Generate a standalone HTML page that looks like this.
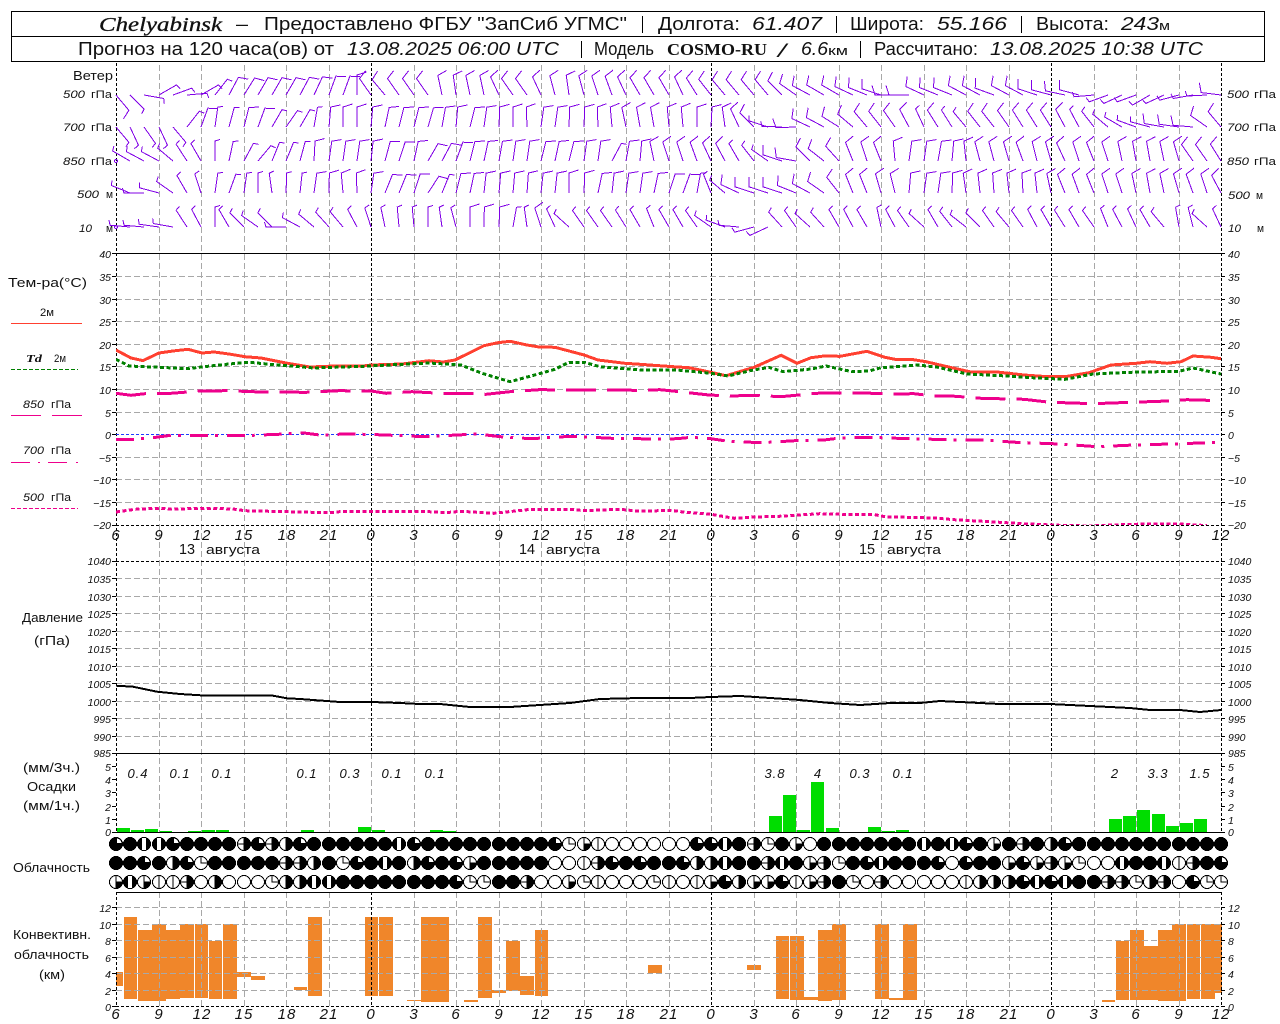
<!DOCTYPE html>
<html lang="ru"><head><meta charset="utf-8"><title>Chelyabinsk</title>
<style>
html,body{margin:0;padding:0;background:#fff}
svg{display:block}
text{font-family:"Liberation Sans",sans-serif;fill:#111}
.it{font-style:italic}
.se{font-family:"Liberation Serif",serif;font-style:italic;stroke:#111;stroke-width:.3px}
.h{font-size:18px}.s{font-size:13px}.a{font-size:10.5px;font-style:italic}.t{font-size:15px;font-style:italic;text-anchor:middle;letter-spacing:1px}
.w{font-size:11px}
.l{shape-rendering:crispEdges;fill:none}
</style></head><body>
<svg width="1280" height="1024" viewBox="0 0 1280 1024" xmlns="http://www.w3.org/2000/svg">
<defs>
<path id="L" d="M0 0V-20l9.500-3"/>
<path id="S" d="M0 0V-20l5-1.500"/>
<circle id="o" r="6.500"/>
<g id="E"><use href="#o" fill="#fff" stroke="#000"/></g>
<g id="F"><use href="#o" fill="#000" stroke="#000"/></g>
<g id="R"><use href="#o" fill="#fff" stroke="#000"/><path d="M0-6.500A6.500 6.500 0 0 1 0 6.500Z" fill="#000" stroke="#000"/></g>
<g id="W"><use href="#o" fill="#000" stroke="#000"/><path d="M1-1V-5.500A5.500 5.500 0 0 1 5.500-1Z" fill="#fff"/></g>
<g id="V"><use href="#o" fill="#fff" stroke="#000"/><path d="M0-6V6" stroke="#000"/></g>
<g id="H"><use href="#R"/><path d="M-6 0H0" stroke="#000"/></g>
<g id="Q"><use href="#o" fill="#fff" stroke="#000"/><path d="M0-6V0H6" stroke="#000"/></g>
<g id="P"><use href="#o" fill="#fff" stroke="#000"/><path d="M0-6V6M0 0H6" stroke="#000"/><path d="M0 0H6.500A6.500 6.500 0 0 1 0 6.500Z" fill="#000" stroke="#000"/></g>
<g id="T"><use href="#o" fill="#000" stroke="#000"/><path d="M-2-6H2V6H-2Z" fill="#fff"/></g>
<clipPath id="c1"><rect x="116" y="253" width="1106" height="272"/></clipPath>
</defs>

<!-- header -->
<g class="l" stroke="#000" stroke-width="1">
<path d="M11.500 11.500H1264.500V61.500H11.500ZM11.500 36.500H1264.500M642.500 16V33M836.500 16V33M1021.500 16V33M581.500 41V58M860.500 41V58"/>
</g>
<text x="99" y="31" class="se" font-size="20" textLength="123" lengthAdjust="spacingAndGlyphs">Chelyabinsk</text>
<text x="236" y="30" class="h" textLength="12" lengthAdjust="spacingAndGlyphs">—</text>
<text x="264" y="30" class="h" textLength="363" lengthAdjust="spacingAndGlyphs">Предоставлено ФГБУ "ЗапСиб УГМС"</text>
<text x="658" y="30" class="h" textLength="82" lengthAdjust="spacingAndGlyphs">Долгота:</text>
<text x="752" y="30" class="h it" textLength="70" lengthAdjust="spacingAndGlyphs">61.407</text>
<text x="850" y="30" class="h" textLength="74" lengthAdjust="spacingAndGlyphs">Широта:</text>
<text x="937" y="30" class="h it" textLength="70" lengthAdjust="spacingAndGlyphs">55.166</text>
<text x="1036" y="30" class="h" textLength="73" lengthAdjust="spacingAndGlyphs">Высота:</text>
<text x="1121" y="30" class="h it" textLength="38" lengthAdjust="spacingAndGlyphs">243</text>
<text x="1159" y="30" class="s" textLength="11" lengthAdjust="spacingAndGlyphs">м</text>
<text x="78" y="55" class="h" textLength="256" lengthAdjust="spacingAndGlyphs">Прогноз на 120 часа(ов) от</text>
<text x="347" y="55" class="h it" textLength="212" lengthAdjust="spacingAndGlyphs">13.08.2025 06:00 UTC</text>
<text x="594" y="55" class="h" textLength="60" lengthAdjust="spacingAndGlyphs">Модель</text>
<text x="667" y="55" font-size="17" font-weight="bold" textLength="100" lengthAdjust="spacingAndGlyphs" style="font-family:'Liberation Serif',serif">COSMO-RU</text>
<text x="778" y="57" class="h it" font-size="20" textLength="8" lengthAdjust="spacingAndGlyphs">/</text>
<text x="801" y="55" class="h it" textLength="27" lengthAdjust="spacingAndGlyphs">6.6</text>
<text x="828" y="55" class="s" textLength="20" lengthAdjust="spacingAndGlyphs">км</text>
<text x="874" y="55" class="h" textLength="104" lengthAdjust="spacingAndGlyphs">Рассчитано:</text>
<text x="990" y="55" class="h it" textLength="213" lengthAdjust="spacingAndGlyphs">13.08.2025 10:38 UTC</text>

<!-- conv bars -->
<path fill="#f0862a" d="M116 972h7v14h-7zM124 917h13v82h-13zM138 930h14v71h-14zM152 924h14v77h-14zM166 930h14v69h-14zM180 924h14v74h-14zM195 924h13v74h-13zM209 941h13v58h-13zM223 924h14v75h-14zM237 972h14v5h-14zM251 976h14v4h-14zM294 987h13v3h-13zM308 917h14v79h-14zM365 917h13v79h-13zM379 917h14v79h-14zM407 1000h14v1h-14zM421 917h28v85h-28zM464 1000h14v2h-14zM478 917h14v81h-14zM492 990h14v3h-14zM506 941h14v50h-14zM520 976h14v19h-14zM535 930h13v66h-13zM648 965h14v8h-14zM747 965h14v5h-14zM776 936h13v63h-13zM790 936h14v64h-14zM804 997h14v3h-14zM818 930h14v71h-14zM832 924h14v76h-14zM875 924h14v75h-14zM889 998h14v2h-14zM903 924h14v76h-14zM1102 1000h13v2h-13zM1116 941h13v59h-13zM1130 930h14v70h-14zM1144 946h14v54h-14zM1158 930h14v71h-14zM1172 924h14v77h-14zM1187 924h13v75h-13zM1201 924h14v75h-14zM1215 924h7v69h-7z"/>

<!-- precip bars -->
<path fill="#00dd00" d="M117 828h13v4h-13zM131 830h13v2h-13zM145 829h13v3h-13zM159 831h13v1h-13zM188 831h13v1h-13zM202 830h13v2h-13zM216 830h13v2h-13zM301 830h13v2h-13zM358 827h13v5h-13zM372 830h13v2h-13zM430 830h13v2h-13zM443 831h13v1h-13zM769 816h13v16h-13zM783 795h13v37h-13zM797 830h13v2h-13zM811 782h13v50h-13zM826 828h13v4h-13zM868 827h13v5h-13zM882 831h13v1h-13zM896 830h13v2h-13zM1109 819h13v13h-13zM1123 816h13v16h-13zM1137 810h13v22h-13zM1152 814h13v18h-13zM1166 826h13v6h-13zM1180 823h13v9h-13zM1194 819h13v13h-13z"/>

<!-- grid horizontal -->
<g class="l" stroke="#a8a8a8" stroke-dasharray="6 3">
<path d="M116 276.500H1221M116 299.500H1221M116 321.500H1221M116 344.500H1221M116 366.500H1221M116 389.500H1221M116 412.500H1221M116 457.500H1221M116 479.500H1221M116 502.500H1221"/>
<path d="M116 578.500H1221M116 596.500H1221M116 613.500H1221M116 631.500H1221M116 648.500H1221M116 666.500H1221M116 683.500H1221M116 701.500H1221M116 718.500H1221M116 736.500H1221"/>
<path d="M116 907.500H1221M116 924.500H1221M116 940.500H1221M116 957.500H1221M116 973.500H1221M116 990.500H1221"/>
<!-- vertical -->
<path d="M159.500 65V832M201.500 65V832M244.500 65V832M286.500 65V832M329.500 65V832M414.500 65V832M456.500 65V832M499.500 65V832M541.500 65V832M584.500 65V832M626.500 65V832M669.500 65V832M754.500 65V832M796.500 65V832M839.500 65V832M881.500 65V832M924.500 65V832M966.500 65V832M1009.500 65V832M1094.500 65V832M1136.500 65V832M1179.500 65V832"/>
<path d="M371.500 753V832M711.500 753V832M1051.500 753V832"/>
<path d="M159.500 892V1006M201.500 892V1006M244.500 892V1006M286.500 892V1006M329.500 892V1006M414.500 892V1006M456.500 892V1006M499.500 892V1006M541.500 892V1006M584.500 892V1006M626.500 892V1006M669.500 892V1006M754.500 892V1006M796.500 892V1006M839.500 892V1006M881.500 892V1006M924.500 892V1006M966.500 892V1006M1009.500 892V1006M1094.500 892V1006M1136.500 892V1006M1179.500 892V1006"/>
</g>
<!-- black axes -->
<g class="l" stroke="#000">
<path stroke-dasharray="3 2" d="M116.500 63V832M1221.500 63V832M116.500 892V1006M1221.500 892V1006M371.500 63V753M711.500 63V753M1051.500 63V753M371.500 892V1006M711.500 892V1006M1051.500 892V1006M116 525.500H1221M116 561.500H1221M116 1006.500H1221"/>
<path d="M116 253.500H1221M116 753.500H1221M116 832.500H1221M116 892.500H1221"/>
<path d="M112 253.500h4M112 276.500h4M112 299.500h4M112 321.500h4M112 344.500h4M112 366.500h4M112 389.500h4M112 412.500h4M112 434.500h4M112 457.500h4M112 479.500h4M112 502.500h4M112 525.500h4M112 561.500h4M112 578.500h4M112 596.500h4M112 613.500h4M112 631.500h4M112 648.500h4M112 666.500h4M112 683.500h4M112 701.500h4M112 718.500h4M112 736.500h4M112 753.500h4M112 766.500h4M112 779.500h4M112 792.500h4M112 806.500h4M112 819.500h4M112 832.500h4M112 907.500h4M112 924.500h4M112 940.500h4M112 957.500h4M112 973.500h4M112 990.500h4M112 1006.500h4"/>
<path d="M1221 253.500h4M1221 276.500h4M1221 299.500h4M1221 321.500h4M1221 344.500h4M1221 366.500h4M1221 389.500h4M1221 412.500h4M1221 434.500h4M1221 457.500h4M1221 479.500h4M1221 502.500h4M1221 525.500h4M1221 561.500h4M1221 578.500h4M1221 596.500h4M1221 613.500h4M1221 631.500h4M1221 648.500h4M1221 666.500h4M1221 683.500h4M1221 701.500h4M1221 718.500h4M1221 736.500h4M1221 753.500h4M1221 766.500h4M1221 779.500h4M1221 792.500h4M1221 806.500h4M1221 819.500h4M1221 832.500h4M1221 907.500h4M1221 924.500h4M1221 940.500h4M1221 957.500h4M1221 973.500h4M1221 990.500h4M1221 1006.500h4"/>
</g>
<path class="l" stroke="#1f3cff" stroke-dasharray="3 2" d="M116 434.500H1221"/>

<!-- curves -->
<g class="l" stroke-width="3" clip-path="url(#c1)">
<polyline stroke="#ee008c" stroke-dasharray="4 2.500" points="116,512 135,509.300 159,508.300 171,509 212,508.300 233,509 245,510.700 286,511.700 331,512.700 343,511.300 429,511.700 445,512.700 461,511.300 494,513.300 531,509.300 571,509.300 584,510.700 620,509.300 640,511.300 671,510.300 685,512.300 711,514.300 734,518.300 754,517 779,516.300 820,513.700 844,514.300 873,514.300 885,516.700 934,518 958,520 983,521.300 1028,524 1060,525.300 1090,526 1130,524.300 1179,524 1207,525.600"/>
<polyline stroke="#ee008c" stroke-dasharray="18 7 3 9" points="116,439.300 135,439.300 153,437.700 171,435.300 200,435.300 253,435.300 278,434.300 304,433 322,435.300 343,434 367,434.300 392,435.300 425,436.700 457,435 478,434 500,436.700 531,438.700 571,436.300 612,438.300 640,438.700 652,439.300 677,438.700 691,437.300 711,438.700 728,441.300 762,442.700 795,440.700 824,440 840,438 869,437.300 909,438.700 950,439.700 987,440.300 1016,442.300 1060,444 1097,446.700 1134,445 1171,444 1221,442.300"/>
<polyline stroke="#ee008c" stroke-dasharray="30 11" points="116,393.300 131,395.300 145,393.700 171,393.300 200,391 227,390.700 261,392 306,392.300 339,390.700 371,391 386,393.300 412,391.700 441,393.300 469,393.300 486,394.300 510,391.700 539,389.700 584,390 640,390.300 660,389.700 673,391 709,395 730,396 754,395.300 781,396.700 816,393.300 844,392.700 873,393.300 889,394 914,393.700 934,396 958,396.300 971,398 997,398.700 1024,399.300 1050,402.300 1073,403 1093,403.700 1120,402.700 1160,401.300 1187,399.700 1221,400.700"/>
<polyline stroke="#ff4030" points="116,350 131,358 143,360.600 159,353 173,351 188,349.300 202,353 214,352 229,354 245,356.700 261,358 286,363 310,367 335,366 363,366 371,365 402,364 429,360.700 443,362 455,360 484,345.700 498,342.700 510,341.300 527,345 539,347 555,347.300 569,351 584,355 598,360 625,363.300 640,364.300 673,366.700 689,367.700 711,372.300 726,375.700 754,367.300 781,355.300 797,363.300 811,357.700 824,356 840,356.300 867,351.300 885,357.300 895,359.300 911,359.300 926,361.700 950,367.300 971,372 997,372 1024,375 1048,376.700 1065,376.700 1089,372.700 1111,365 1136,363.300 1150,361.700 1167,363.300 1181,361.700 1193,356 1211,357.300 1221,358.700"/>
<polyline stroke="#008000" stroke-dasharray="4 2.500" points="116,359.300 129,366 159,367.300 188,368.700 204,366.700 229,364 249,362.300 278,365 314,368 363,366.300 402,364.300 429,363 461,365 482,373.300 510,381.700 531,376 555,369.300 569,362.300 584,362.300 600,366.700 640,370 677,370 711,373.300 728,376 750,370.700 769,367.300 783,371.700 811,369 826,366 852,371.700 869,371 881,367.700 918,365 938,367.300 967,374 1007,376 1032,377.700 1065,379.300 1093,374 1130,372.300 1179,371.300 1193,368 1221,374"/>
</g>
<polyline class="l" stroke="#000" stroke-width="2" points="116,685.700 133,686.700 157,691.700 180,694 207,695.700 273,695.700 287,698.300 300,699 340,702 371,702 400,703 420,704 440,704 470,707 510,707 540,705 570,703 600,699 640,698 690,698 711,697 740,696 770,698 800,700 830,703 860,705 890,703 920,703 940,701 960,702 1000,704 1050,704 1090,706 1130,708 1150,710 1180,710 1200,712 1221,710"/>

<!-- wind barbs -->
<g class="l" stroke="#8000e6">
<g transform="translate(0 95)">
<use href="#L" transform="translate(116)rotate(140)"/><use href="#S" transform="translate(130)rotate(135)"/><use href="#S" transform="translate(144)rotate(100)"/><use href="#S" transform="translate(159)rotate(60)"/><use href="#S" transform="translate(173)rotate(70)"/><use href="#S" transform="translate(187)rotate(85)"/><use href="#S" transform="translate(201)rotate(60)"/><use href="#S" transform="translate(215)rotate(38)"/><use href="#L" transform="translate(229)rotate(28)"/><use href="#L" transform="translate(244)rotate(32)"/><use href="#L" transform="translate(258)rotate(30)"/><use href="#L" transform="translate(272)rotate(30)"/><use href="#L" transform="translate(286)rotate(30)"/><use href="#L" transform="translate(300)rotate(28)"/><use href="#L" transform="translate(314)rotate(25)"/><use href="#L" transform="translate(329)rotate(20)"/><use href="#L" transform="translate(343)rotate(20)"/><use href="#L" transform="translate(357)rotate(0)"/><use href="#L" transform="translate(371)rotate(-35)"/><use href="#L" transform="translate(385)rotate(-40)"/><use href="#L" transform="translate(399)rotate(-35)"/><use href="#L" transform="translate(414)rotate(-35)"/><use href="#L" transform="translate(428)rotate(-35)"/><use href="#L" transform="translate(442)rotate(-12)"/><use href="#L" transform="translate(456)rotate(-8)"/><use href="#L" transform="translate(470)rotate(-12)"/><use href="#L" transform="translate(484)rotate(-12)"/><use href="#L" transform="translate(499)rotate(-25)"/><use href="#L" transform="translate(513)rotate(-35)"/><use href="#L" transform="translate(527)rotate(-35)"/><use href="#L" transform="translate(541)rotate(-25)"/><use href="#L" transform="translate(555)rotate(-15)"/><use href="#L" transform="translate(569)rotate(-8)"/><use href="#L" transform="translate(584)rotate(-15)"/><use href="#L" transform="translate(598)rotate(-18)"/><use href="#L" transform="translate(612)rotate(-20)"/><use href="#L" transform="translate(626)rotate(-25)"/><use href="#L" transform="translate(640)rotate(-30)"/><use href="#L" transform="translate(654)rotate(-30)"/><use href="#L" transform="translate(669)rotate(-30)"/><use href="#L" transform="translate(683)rotate(-25)"/><use href="#L" transform="translate(697)rotate(-32)"/><use href="#L" transform="translate(711)rotate(-38)"/><use href="#L" transform="translate(725)rotate(-40)"/><use href="#L" transform="translate(739)rotate(-40)"/><use href="#L" transform="translate(754)rotate(-40)"/><use href="#L" transform="translate(768)rotate(-40)"/><use href="#L" transform="translate(782)rotate(-45)"/><use href="#L" transform="translate(796)rotate(-55)"/><use href="#L" transform="translate(810)rotate(-62)"/><use href="#L" transform="translate(824)rotate(-60)"/><use href="#L" transform="translate(839)rotate(-60)"/><use href="#L" transform="translate(853)rotate(-65)"/><use href="#L" transform="translate(867)rotate(-68)"/><use href="#L" transform="translate(881)rotate(-72)"/><use href="#L" transform="translate(895)rotate(-90)"/><use href="#L" transform="translate(909)rotate(-90)"/><use href="#L" transform="translate(924)rotate(-65)"/><use href="#L" transform="translate(938)rotate(-68)"/><use href="#L" transform="translate(952)rotate(-68)"/><use href="#L" transform="translate(966)rotate(-62)"/><use href="#L" transform="translate(980)rotate(-62)"/><use href="#L" transform="translate(994)rotate(-70)"/><use href="#L" transform="translate(1009)rotate(-62)"/><use href="#L" transform="translate(1023)rotate(-62)"/><use href="#L" transform="translate(1037)rotate(-72)"/><use href="#L" transform="translate(1051)rotate(-75)"/><use href="#L" transform="translate(1065)rotate(-78)"/><use href="#L" transform="translate(1079)rotate(-75)"/><use href="#S" transform="translate(1094)rotate(-95)"/><use href="#S" transform="translate(1108)rotate(-110)"/><use href="#S" transform="translate(1122)rotate(-115)"/><use href="#S" transform="translate(1136)rotate(-110)"/><use href="#S" transform="translate(1150)rotate(-120)"/><use href="#S" transform="translate(1164)rotate(-115)"/><use href="#S" transform="translate(1179)rotate(-105)"/><use href="#S" transform="translate(1193)rotate(-100)"/><use href="#S" transform="translate(1207)rotate(-93)"/><use href="#L" transform="translate(1221)rotate(-83)"/>
</g>
<g transform="translate(0 127)">
<use href="#S" transform="translate(116)rotate(140)"/><use href="#S" transform="translate(130)rotate(155)"/><use href="#S" transform="translate(144)rotate(145)"/><use href="#S" transform="translate(159)rotate(155)"/><use href="#S" transform="translate(173)rotate(140)"/><use href="#S" transform="translate(187)rotate(38)"/><use href="#L" transform="translate(201)rotate(20)"/><use href="#S" transform="translate(215)rotate(8)"/><use href="#S" transform="translate(229)rotate(15)"/><use href="#L" transform="translate(244)rotate(14)"/><use href="#L" transform="translate(258)rotate(20)"/><use href="#S" transform="translate(272)rotate(30)"/><use href="#S" transform="translate(286)rotate(35)"/><use href="#S" transform="translate(300)rotate(30)"/><use href="#S" transform="translate(314)rotate(10)"/><use href="#L" transform="translate(329)rotate(5)"/><use href="#L" transform="translate(343)rotate(0)"/><use href="#L" transform="translate(357)rotate(0)"/><use href="#L" transform="translate(371)rotate(5)"/><use href="#L" transform="translate(385)rotate(12)"/><use href="#L" transform="translate(399)rotate(14)"/><use href="#L" transform="translate(414)rotate(14)"/><use href="#L" transform="translate(428)rotate(16)"/><use href="#L" transform="translate(442)rotate(10)"/><use href="#L" transform="translate(456)rotate(5)"/><use href="#L" transform="translate(470)rotate(14)"/><use href="#L" transform="translate(484)rotate(8)"/><use href="#L" transform="translate(499)rotate(2)"/><use href="#L" transform="translate(513)rotate(0)"/><use href="#L" transform="translate(527)rotate(-2)"/><use href="#L" transform="translate(541)rotate(8)"/><use href="#L" transform="translate(555)rotate(8)"/><use href="#L" transform="translate(569)rotate(2)"/><use href="#L" transform="translate(584)rotate(2)"/><use href="#L" transform="translate(598)rotate(-2)"/><use href="#L" transform="translate(612)rotate(-5)"/><use href="#L" transform="translate(626)rotate(-12)"/><use href="#L" transform="translate(640)rotate(-10)"/><use href="#L" transform="translate(654)rotate(-10)"/><use href="#L" transform="translate(669)rotate(-5)"/><use href="#L" transform="translate(683)rotate(-5)"/><use href="#L" transform="translate(697)rotate(0)"/><use href="#L" transform="translate(711)rotate(3)"/><use href="#L" transform="translate(725)rotate(-8)"/><use href="#L" transform="translate(739)rotate(-25)"/><use href="#L" transform="translate(754)rotate(-45)"/><use href="#S" transform="translate(768)rotate(-72)"/><use href="#S" transform="translate(782)rotate(-88)"/><use href="#L" transform="translate(796)rotate(-92)"/><use href="#L" transform="translate(810)rotate(-65)"/><use href="#L" transform="translate(824)rotate(-62)"/><use href="#L" transform="translate(839)rotate(-58)"/><use href="#L" transform="translate(853)rotate(-50)"/><use href="#L" transform="translate(867)rotate(-40)"/><use href="#L" transform="translate(881)rotate(-38)"/><use href="#L" transform="translate(895)rotate(-35)"/><use href="#L" transform="translate(909)rotate(-28)"/><use href="#S" transform="translate(924)rotate(-25)"/><use href="#L" transform="translate(938)rotate(-32)"/><use href="#S" transform="translate(952)rotate(-32)"/><use href="#S" transform="translate(966)rotate(-40)"/><use href="#L" transform="translate(980)rotate(-38)"/><use href="#L" transform="translate(994)rotate(-38)"/><use href="#L" transform="translate(1009)rotate(-35)"/><use href="#L" transform="translate(1023)rotate(-32)"/><use href="#L" transform="translate(1037)rotate(-32)"/><use href="#L" transform="translate(1051)rotate(-32)"/><use href="#L" transform="translate(1065)rotate(-28)"/><use href="#S" transform="translate(1079)rotate(-28)"/><use href="#S" transform="translate(1094)rotate(-38)"/><use href="#S" transform="translate(1108)rotate(-50)"/><use href="#S" transform="translate(1122)rotate(-60)"/><use href="#S" transform="translate(1136)rotate(-70)"/><use href="#S" transform="translate(1150)rotate(-75)"/><use href="#L" transform="translate(1164)rotate(-80)"/><use href="#L" transform="translate(1179)rotate(-82)"/><use href="#L" transform="translate(1193)rotate(-85)"/><use href="#L" transform="translate(1207)rotate(-55)"/><use href="#L" transform="translate(1221)rotate(-40)"/>
</g>
<g transform="translate(0 161)">
<circle cx="116" cy="0" r="1.500"/><use href="#S" transform="translate(130)rotate(-60)"/><use href="#S" transform="translate(144)rotate(-62)"/><use href="#S" transform="translate(159)rotate(-62)"/><use href="#S" transform="translate(173)rotate(-50)"/><use href="#S" transform="translate(187)rotate(-33)"/><use href="#S" transform="translate(201)rotate(-30)"/><use href="#S" transform="translate(215)rotate(0)"/><use href="#S" transform="translate(229)rotate(12)"/><use href="#S" transform="translate(244)rotate(28)"/><use href="#S" transform="translate(258)rotate(40)"/><use href="#S" transform="translate(272)rotate(22)"/><use href="#S" transform="translate(286)rotate(22)"/><use href="#S" transform="translate(300)rotate(15)"/><use href="#L" transform="translate(314)rotate(3)"/><use href="#L" transform="translate(329)rotate(8)"/><use href="#L" transform="translate(343)rotate(8)"/><use href="#L" transform="translate(357)rotate(8)"/><use href="#L" transform="translate(371)rotate(6)"/><use href="#L" transform="translate(385)rotate(15)"/><use href="#L" transform="translate(399)rotate(18)"/><use href="#L" transform="translate(414)rotate(12)"/><use href="#L" transform="translate(428)rotate(30)"/><use href="#L" transform="translate(442)rotate(28)"/><use href="#L" transform="translate(456)rotate(20)"/><use href="#L" transform="translate(470)rotate(14)"/><use href="#L" transform="translate(484)rotate(12)"/><use href="#L" transform="translate(499)rotate(10)"/><use href="#L" transform="translate(513)rotate(8)"/><use href="#L" transform="translate(527)rotate(8)"/><use href="#L" transform="translate(541)rotate(14)"/><use href="#L" transform="translate(555)rotate(12)"/><use href="#L" transform="translate(569)rotate(14)"/><use href="#L" transform="translate(584)rotate(8)"/><use href="#L" transform="translate(598)rotate(8)"/><use href="#S" transform="translate(612)rotate(28)"/><use href="#L" transform="translate(626)rotate(10)"/><use href="#L" transform="translate(640)rotate(5)"/><use href="#L" transform="translate(654)rotate(-12)"/><use href="#L" transform="translate(669)rotate(-18)"/><use href="#L" transform="translate(683)rotate(-18)"/><use href="#L" transform="translate(697)rotate(-20)"/><use href="#L" transform="translate(711)rotate(-25)"/><use href="#L" transform="translate(725)rotate(-28)"/><use href="#S" transform="translate(739)rotate(-30)"/><use href="#S" transform="translate(754)rotate(-38)"/><use href="#S" transform="translate(768)rotate(-55)"/><use href="#L" transform="translate(782)rotate(-72)"/><use href="#L" transform="translate(796)rotate(-80)"/><use href="#L" transform="translate(810)rotate(-45)"/><use href="#L" transform="translate(824)rotate(-52)"/><use href="#L" transform="translate(839)rotate(-42)"/><use href="#L" transform="translate(853)rotate(-22)"/><use href="#L" transform="translate(867)rotate(-18)"/><use href="#L" transform="translate(881)rotate(-22)"/><use href="#L" transform="translate(895)rotate(-5)"/><use href="#L" transform="translate(909)rotate(8)"/><use href="#L" transform="translate(924)rotate(8)"/><use href="#L" transform="translate(938)rotate(10)"/><use href="#L" transform="translate(952)rotate(5)"/><use href="#L" transform="translate(966)rotate(-6)"/><use href="#L" transform="translate(980)rotate(-15)"/><use href="#L" transform="translate(994)rotate(-15)"/><use href="#L" transform="translate(1009)rotate(-16)"/><use href="#L" transform="translate(1023)rotate(-20)"/><use href="#L" transform="translate(1037)rotate(-14)"/><use href="#L" transform="translate(1051)rotate(-16)"/><use href="#L" transform="translate(1065)rotate(-25)"/><use href="#L" transform="translate(1079)rotate(-18)"/><use href="#L" transform="translate(1094)rotate(-22)"/><use href="#L" transform="translate(1108)rotate(-18)"/><use href="#L" transform="translate(1122)rotate(-12)"/><use href="#L" transform="translate(1136)rotate(-10)"/><use href="#L" transform="translate(1150)rotate(-10)"/><use href="#L" transform="translate(1164)rotate(-12)"/><use href="#L" transform="translate(1179)rotate(-16)"/><use href="#L" transform="translate(1193)rotate(-35)"/><use href="#L" transform="translate(1207)rotate(-35)"/><use href="#L" transform="translate(1221)rotate(-32)"/>
</g>
<g transform="translate(0 193)">
<use href="#S" transform="translate(130)rotate(-68)"/><use href="#S" transform="translate(144)rotate(-90)"/><use href="#S" transform="translate(159)rotate(-75)"/><use href="#S" transform="translate(173)rotate(-55)"/><use href="#S" transform="translate(187)rotate(-30)"/><use href="#S" transform="translate(201)rotate(-18)"/><use href="#S" transform="translate(215)rotate(8)"/><use href="#S" transform="translate(229)rotate(20)"/><use href="#S" transform="translate(244)rotate(8)"/><use href="#S" transform="translate(258)rotate(0)"/><use href="#S" transform="translate(272)rotate(-8)"/><use href="#S" transform="translate(286)rotate(2)"/><use href="#S" transform="translate(300)rotate(6)"/><use href="#L" transform="translate(314)rotate(8)"/><use href="#L" transform="translate(329)rotate(1)"/><use href="#L" transform="translate(343)rotate(-5)"/><use href="#L" transform="translate(357)rotate(-2)"/><use href="#L" transform="translate(371)rotate(8)"/><use href="#L" transform="translate(385)rotate(22)"/><use href="#L" transform="translate(399)rotate(22)"/><use href="#L" transform="translate(414)rotate(18)"/><use href="#L" transform="translate(428)rotate(33)"/><use href="#S" transform="translate(442)rotate(22)"/><use href="#L" transform="translate(456)rotate(14)"/><use href="#L" transform="translate(470)rotate(12)"/><use href="#L" transform="translate(484)rotate(6)"/><use href="#L" transform="translate(499)rotate(5)"/><use href="#L" transform="translate(513)rotate(5)"/><use href="#L" transform="translate(527)rotate(4)"/><use href="#L" transform="translate(541)rotate(6)"/><use href="#L" transform="translate(555)rotate(6)"/><use href="#L" transform="translate(569)rotate(0)"/><use href="#L" transform="translate(584)rotate(2)"/><use href="#L" transform="translate(598)rotate(12)"/><use href="#L" transform="translate(612)rotate(6)"/><use href="#L" transform="translate(626)rotate(8)"/><use href="#L" transform="translate(640)rotate(8)"/><use href="#L" transform="translate(654)rotate(12)"/><use href="#L" transform="translate(669)rotate(18)"/><use href="#L" transform="translate(683)rotate(20)"/><use href="#S" transform="translate(697)rotate(10)"/><use href="#S" transform="translate(711)rotate(-22)"/><use href="#S" transform="translate(725)rotate(-50)"/><use href="#L" transform="translate(739)rotate(-65)"/><use href="#L" transform="translate(754)rotate(-72)"/><use href="#L" transform="translate(768)rotate(-72)"/><use href="#L" transform="translate(782)rotate(-72)"/><use href="#L" transform="translate(796)rotate(-68)"/><use href="#L" transform="translate(810)rotate(-62)"/><use href="#L" transform="translate(824)rotate(-55)"/><use href="#L" transform="translate(839)rotate(-38)"/><use href="#L" transform="translate(853)rotate(-22)"/><use href="#L" transform="translate(867)rotate(-22)"/><use href="#L" transform="translate(881)rotate(-16)"/><use href="#L" transform="translate(895)rotate(-14)"/><use href="#L" transform="translate(909)rotate(5)"/><use href="#L" transform="translate(924)rotate(8)"/><use href="#L" transform="translate(938)rotate(8)"/><use href="#L" transform="translate(952)rotate(2)"/><use href="#L" transform="translate(966)rotate(-8)"/><use href="#L" transform="translate(980)rotate(-6)"/><use href="#L" transform="translate(994)rotate(-4)"/><use href="#L" transform="translate(1009)rotate(-6)"/><use href="#L" transform="translate(1023)rotate(-3)"/><use href="#L" transform="translate(1037)rotate(-6)"/><use href="#L" transform="translate(1051)rotate(-12)"/><use href="#L" transform="translate(1065)rotate(-22)"/><use href="#L" transform="translate(1079)rotate(-20)"/><use href="#L" transform="translate(1094)rotate(-22)"/><use href="#L" transform="translate(1108)rotate(-18)"/><use href="#L" transform="translate(1122)rotate(-18)"/><use href="#L" transform="translate(1136)rotate(-12)"/><use href="#L" transform="translate(1150)rotate(-10)"/><use href="#L" transform="translate(1164)rotate(-12)"/><use href="#L" transform="translate(1179)rotate(-16)"/><use href="#L" transform="translate(1193)rotate(-20)"/><use href="#L" transform="translate(1207)rotate(-18)"/><use href="#L" transform="translate(1221)rotate(-28)"/>
</g>
<g transform="translate(0 227)">
<circle cx="116" cy="0" r="1.500"/><use href="#S" transform="translate(130)rotate(-85)"/><use href="#S" transform="translate(144)rotate(-85)"/><use href="#S" transform="translate(159)rotate(-82)"/><use href="#S" transform="translate(173)rotate(-80)"/><use href="#S" transform="translate(187)rotate(-33)"/><use href="#S" transform="translate(201)rotate(-28)"/><use href="#S" transform="translate(215)rotate(0)"/><use href="#S" transform="translate(229)rotate(-30)"/><use href="#S" transform="translate(244)rotate(-45)"/><use href="#S" transform="translate(258)rotate(-55)"/><use href="#S" transform="translate(272)rotate(-45)"/><use href="#S" transform="translate(286)rotate(-90)"/><use href="#S" transform="translate(300)rotate(-62)"/><use href="#S" transform="translate(314)rotate(-50)"/><use href="#S" transform="translate(329)rotate(-42)"/><use href="#S" transform="translate(343)rotate(-40)"/><use href="#S" transform="translate(357)rotate(-28)"/><use href="#S" transform="translate(371)rotate(-18)"/><use href="#S" transform="translate(385)rotate(-12)"/><use href="#S" transform="translate(399)rotate(-5)"/><use href="#S" transform="translate(414)rotate(-5)"/><use href="#S" transform="translate(428)rotate(0)"/><use href="#S" transform="translate(442)rotate(-8)"/><use href="#S" transform="translate(456)rotate(-15)"/><use href="#L" transform="translate(470)rotate(0)"/><use href="#L" transform="translate(484)rotate(1)"/><use href="#L" transform="translate(499)rotate(2)"/><use href="#S" transform="translate(513)rotate(10)"/><use href="#S" transform="translate(527)rotate(-8)"/><use href="#L" transform="translate(541)rotate(-18)"/><use href="#S" transform="translate(555)rotate(-25)"/><use href="#S" transform="translate(569)rotate(-48)"/><use href="#S" transform="translate(584)rotate(-35)"/><use href="#S" transform="translate(598)rotate(-35)"/><use href="#S" transform="translate(612)rotate(-35)"/><use href="#S" transform="translate(626)rotate(-32)"/><use href="#S" transform="translate(640)rotate(-30)"/><use href="#S" transform="translate(654)rotate(-22)"/><use href="#S" transform="translate(669)rotate(-30)"/><use href="#S" transform="translate(683)rotate(-30)"/><use href="#S" transform="translate(697)rotate(-35)"/><use href="#S" transform="translate(711)rotate(-55)"/><use href="#S" transform="translate(725)rotate(-70)"/><use href="#S" transform="translate(739)rotate(-85)"/><use href="#S" transform="translate(754)rotate(-105)"/><use href="#S" transform="translate(768)rotate(-115)"/><use href="#S" transform="translate(782)rotate(-42)"/><use href="#S" transform="translate(796)rotate(-35)"/><use href="#S" transform="translate(810)rotate(-48)"/><use href="#S" transform="translate(824)rotate(-42)"/><use href="#S" transform="translate(839)rotate(-30)"/><use href="#S" transform="translate(853)rotate(-28)"/><use href="#S" transform="translate(867)rotate(-30)"/><use href="#S" transform="translate(881)rotate(-12)"/><use href="#S" transform="translate(895)rotate(-28)"/><use href="#S" transform="translate(909)rotate(-35)"/><use href="#S" transform="translate(924)rotate(-48)"/><use href="#S" transform="translate(938)rotate(-30)"/><use href="#S" transform="translate(952)rotate(-38)"/><use href="#S" transform="translate(966)rotate(-52)"/><use href="#S" transform="translate(980)rotate(-45)"/><use href="#S" transform="translate(994)rotate(-35)"/><use href="#S" transform="translate(1009)rotate(-40)"/><use href="#S" transform="translate(1023)rotate(-35)"/><use href="#S" transform="translate(1037)rotate(-28)"/><use href="#S" transform="translate(1051)rotate(-30)"/><use href="#S" transform="translate(1065)rotate(-32)"/><use href="#S" transform="translate(1079)rotate(-30)"/><use href="#S" transform="translate(1094)rotate(-35)"/><use href="#S" transform="translate(1108)rotate(-22)"/><use href="#S" transform="translate(1122)rotate(-28)"/><use href="#S" transform="translate(1136)rotate(-25)"/><use href="#S" transform="translate(1150)rotate(-30)"/><use href="#S" transform="translate(1164)rotate(-40)"/><use href="#S" transform="translate(1179)rotate(-10)"/><use href="#S" transform="translate(1193)rotate(-14)"/><use href="#S" transform="translate(1207)rotate(-48)"/><use href="#S" transform="translate(1221)rotate(-25)"/>
</g>
</g>

<!-- clouds -->
<g class="l" style="fill:none">
<g transform="translate(0 844)">
<use href="#W" x="116"/><use href="#F" x="130"/><use href="#T" x="144"/><use href="#T" x="159"/><use href="#W" x="173"/><use href="#F" x="187"/><use href="#F" x="201"/><use href="#F" x="215"/><use href="#F" x="229"/><use href="#H" x="244"/><use href="#W" x="258"/><use href="#H" x="272"/><use href="#R" x="286"/><use href="#W" x="300"/><use href="#F" x="314"/><use href="#F" x="329"/><use href="#F" x="343"/><use href="#F" x="357"/><use href="#F" x="371"/><use href="#F" x="385"/><use href="#T" x="399"/><use href="#W" x="414"/><use href="#F" x="428"/><use href="#F" x="442"/><use href="#F" x="456"/><use href="#F" x="470"/><use href="#F" x="484"/><use href="#F" x="499"/><use href="#F" x="513"/><use href="#F" x="527"/><use href="#F" x="541"/><use href="#W" x="555"/><use href="#Q" x="569"/><use href="#P" x="584"/><use href="#V" x="598"/><use href="#E" x="612"/><use href="#E" x="626"/><use href="#E" x="640"/><use href="#E" x="654"/><use href="#E" x="669"/><use href="#E" x="683"/><use href="#W" x="697"/><use href="#W" x="711"/><use href="#T" x="725"/><use href="#F" x="739"/><use href="#H" x="754"/><use href="#Q" x="768"/><use href="#F" x="782"/><use href="#P" x="796"/><use href="#E" x="810"/><use href="#F" x="824"/><use href="#F" x="839"/><use href="#F" x="853"/><use href="#F" x="867"/><use href="#F" x="881"/><use href="#F" x="895"/><use href="#F" x="909"/><use href="#T" x="924"/><use href="#F" x="938"/><use href="#T" x="952"/><use href="#W" x="966"/><use href="#F" x="980"/><use href="#P" x="994"/><use href="#F" x="1009"/><use href="#H" x="1023"/><use href="#F" x="1037"/><use href="#R" x="1051"/><use href="#W" x="1065"/><use href="#F" x="1079"/><use href="#F" x="1094"/><use href="#F" x="1108"/><use href="#F" x="1122"/><use href="#F" x="1136"/><use href="#F" x="1150"/><use href="#F" x="1164"/><use href="#F" x="1179"/><use href="#F" x="1193"/><use href="#F" x="1207"/><use href="#F" x="1221"/>
</g>
<g transform="translate(0 863)">
<use href="#F" x="116"/><use href="#F" x="130"/><use href="#W" x="144"/><use href="#F" x="159"/><use href="#R" x="173"/><use href="#W" x="187"/><use href="#Q" x="201"/><use href="#F" x="215"/><use href="#F" x="229"/><use href="#F" x="244"/><use href="#F" x="258"/><use href="#F" x="272"/><use href="#H" x="286"/><use href="#H" x="300"/><use href="#R" x="314"/><use href="#F" x="329"/><use href="#Q" x="343"/><use href="#W" x="357"/><use href="#F" x="371"/><use href="#T" x="385"/><use href="#F" x="399"/><use href="#R" x="414"/><use href="#W" x="428"/><use href="#F" x="442"/><use href="#W" x="456"/><use href="#P" x="470"/><use href="#F" x="484"/><use href="#F" x="499"/><use href="#F" x="513"/><use href="#F" x="527"/><use href="#F" x="541"/><use href="#E" x="555"/><use href="#E" x="569"/><use href="#V" x="584"/><use href="#H" x="598"/><use href="#W" x="612"/><use href="#F" x="626"/><use href="#W" x="640"/><use href="#F" x="654"/><use href="#F" x="669"/><use href="#W" x="683"/><use href="#R" x="697"/><use href="#R" x="711"/><use href="#T" x="725"/><use href="#F" x="739"/><use href="#F" x="754"/><use href="#H" x="768"/><use href="#T" x="782"/><use href="#F" x="796"/><use href="#P" x="810"/><use href="#H" x="824"/><use href="#Q" x="839"/><use href="#F" x="853"/><use href="#W" x="867"/><use href="#T" x="881"/><use href="#F" x="895"/><use href="#F" x="909"/><use href="#F" x="924"/><use href="#W" x="938"/><use href="#E" x="952"/><use href="#W" x="966"/><use href="#F" x="980"/><use href="#F" x="994"/><use href="#P" x="1009"/><use href="#W" x="1023"/><use href="#P" x="1037"/><use href="#H" x="1051"/><use href="#P" x="1065"/><use href="#Q" x="1079"/><use href="#E" x="1094"/><use href="#E" x="1108"/><use href="#T" x="1122"/><use href="#F" x="1136"/><use href="#F" x="1150"/><use href="#T" x="1164"/><use href="#V" x="1179"/><use href="#H" x="1193"/><use href="#F" x="1207"/><use href="#W" x="1221"/>
</g>
<g transform="translate(0 882)">
<use href="#P" x="116"/><use href="#T" x="130"/><use href="#P" x="144"/><use href="#V" x="159"/><use href="#V" x="173"/><use href="#H" x="187"/><use href="#E" x="201"/><use href="#R" x="215"/><use href="#E" x="229"/><use href="#E" x="244"/><use href="#E" x="258"/><use href="#Q" x="272"/><use href="#R" x="286"/><use href="#R" x="300"/><use href="#T" x="314"/><use href="#T" x="329"/><use href="#F" x="343"/><use href="#F" x="357"/><use href="#F" x="371"/><use href="#F" x="385"/><use href="#F" x="399"/><use href="#F" x="414"/><use href="#F" x="428"/><use href="#F" x="442"/><use href="#W" x="456"/><use href="#Q" x="470"/><use href="#Q" x="484"/><use href="#F" x="499"/><use href="#F" x="513"/><use href="#H" x="527"/><use href="#E" x="541"/><use href="#E" x="555"/><use href="#P" x="569"/><use href="#Q" x="584"/><use href="#V" x="598"/><use href="#E" x="612"/><use href="#E" x="626"/><use href="#E" x="640"/><use href="#Q" x="654"/><use href="#V" x="669"/><use href="#E" x="683"/><use href="#V" x="697"/><use href="#P" x="711"/><use href="#W" x="725"/><use href="#R" x="739"/><use href="#P" x="754"/><use href="#P" x="768"/><use href="#W" x="782"/><use href="#V" x="796"/><use href="#P" x="810"/><use href="#H" x="824"/><use href="#F" x="839"/><use href="#Q" x="853"/><use href="#E" x="867"/><use href="#H" x="881"/><use href="#E" x="895"/><use href="#E" x="909"/><use href="#E" x="924"/><use href="#E" x="938"/><use href="#E" x="952"/><use href="#V" x="966"/><use href="#R" x="980"/><use href="#R" x="994"/><use href="#R" x="1009"/><use href="#W" x="1023"/><use href="#T" x="1037"/><use href="#W" x="1051"/><use href="#T" x="1065"/><use href="#F" x="1079"/><use href="#F" x="1094"/><use href="#H" x="1108"/><use href="#H" x="1122"/><use href="#Q" x="1136"/><use href="#R" x="1150"/><use href="#H" x="1164"/><use href="#E" x="1179"/><use href="#W" x="1193"/><use href="#Q" x="1207"/><use href="#Q" x="1221"/>
</g>
</g>

<!-- wind labels -->
<text x="73" y="80" class="s" textLength="40" lengthAdjust="spacingAndGlyphs">Ветер</text>
<g class="w">
<text x="63" y="98" class="it" textLength="22" lengthAdjust="spacingAndGlyphs">500</text><text x="91" y="98" textLength="21" lengthAdjust="spacingAndGlyphs">гПа</text>
<text x="63" y="131" class="it" textLength="22" lengthAdjust="spacingAndGlyphs">700</text><text x="91" y="131" textLength="21" lengthAdjust="spacingAndGlyphs">гПа</text>
<text x="63" y="165" class="it" textLength="22" lengthAdjust="spacingAndGlyphs">850</text><text x="91" y="165" textLength="21" lengthAdjust="spacingAndGlyphs">гПа</text>
<text x="77" y="198" class="it" textLength="22" lengthAdjust="spacingAndGlyphs">500</text><text x="106" y="198" textLength="7" lengthAdjust="spacingAndGlyphs">м</text>
<text x="79" y="232" class="it" textLength="13" lengthAdjust="spacingAndGlyphs">10</text><text x="106" y="232" textLength="7" lengthAdjust="spacingAndGlyphs">м</text>
<text x="1227" y="98" class="it" textLength="22" lengthAdjust="spacingAndGlyphs">500</text><text x="1254" y="98" textLength="22" lengthAdjust="spacingAndGlyphs">гПа</text>
<text x="1227" y="131" class="it" textLength="22" lengthAdjust="spacingAndGlyphs">700</text><text x="1254" y="131" textLength="22" lengthAdjust="spacingAndGlyphs">гПа</text>
<text x="1227" y="165" class="it" textLength="22" lengthAdjust="spacingAndGlyphs">850</text><text x="1254" y="165" textLength="22" lengthAdjust="spacingAndGlyphs">гПа</text>
<text x="1228" y="199" class="it" textLength="22" lengthAdjust="spacingAndGlyphs">500</text><text x="1256" y="199" textLength="7" lengthAdjust="spacingAndGlyphs">м</text>
<text x="1228" y="232" class="it" textLength="13" lengthAdjust="spacingAndGlyphs">10</text><text x="1257" y="232" textLength="7" lengthAdjust="spacingAndGlyphs">м</text>
</g>

<!-- axis labels left -->
<g class="a" text-anchor="end">
<text x="111" y="258">40</text><text x="111" y="281">35</text><text x="111" y="304">30</text><text x="111" y="326">25</text><text x="111" y="349">20</text><text x="111" y="371">15</text><text x="111" y="394">10</text><text x="111" y="417">5</text><text x="111" y="439">0</text><text x="111" y="462">−5</text><text x="111" y="484">−10</text><text x="111" y="507">−15</text><text x="111" y="529">−20</text>
<text x="111" y="565">1040</text><text x="111" y="583">1035</text><text x="111" y="601">1030</text><text x="111" y="618">1025</text><text x="111" y="636">1020</text><text x="111" y="653">1015</text><text x="111" y="671">1010</text><text x="111" y="688">1005</text><text x="111" y="706">1000</text><text x="111" y="723">995</text><text x="111" y="741">990</text><text x="111" y="757">985</text>
<text x="111" y="771">5</text><text x="111" y="784">4</text><text x="111" y="797">3</text><text x="111" y="811">2</text><text x="111" y="824">1</text><text x="111" y="836">0</text>
<text x="111" y="912">12</text><text x="111" y="929">10</text><text x="111" y="945">8</text><text x="111" y="962">6</text><text x="111" y="978">4</text><text x="111" y="995">2</text><text x="111" y="1011">0</text>
</g>
<g class="a">
<text x="1228" y="258">40</text><text x="1228" y="281">35</text><text x="1228" y="304">30</text><text x="1228" y="326">25</text><text x="1228" y="349">20</text><text x="1228" y="371">15</text><text x="1228" y="394">10</text><text x="1228" y="417">5</text><text x="1228" y="439">0</text><text x="1228" y="462">−5</text><text x="1228" y="484">−10</text><text x="1228" y="507">−15</text><text x="1228" y="529">−20</text>
<text x="1228" y="565">1040</text><text x="1228" y="583">1035</text><text x="1228" y="601">1030</text><text x="1228" y="618">1025</text><text x="1228" y="636">1020</text><text x="1228" y="653">1015</text><text x="1228" y="671">1010</text><text x="1228" y="688">1005</text><text x="1228" y="706">1000</text><text x="1228" y="723">995</text><text x="1228" y="741">990</text><text x="1228" y="757">985</text>
<text x="1228" y="771">5</text><text x="1228" y="784">4</text><text x="1228" y="797">3</text><text x="1228" y="811">2</text><text x="1228" y="824">1</text><text x="1228" y="836">0</text>
<text x="1228" y="912">12</text><text x="1228" y="929">10</text><text x="1228" y="945">8</text><text x="1228" y="962">6</text><text x="1228" y="978">4</text><text x="1228" y="995">2</text><text x="1228" y="1011">0</text>
</g>

<!-- time labels -->
<g class="t">
<text x="116" y="540">6</text><text x="159" y="540">9</text><text x="202" y="540">12</text><text x="244" y="540">15</text><text x="287" y="540">18</text><text x="329" y="540">21</text><text x="371" y="540">0</text><text x="414" y="540">3</text><text x="456" y="540">6</text><text x="499" y="540">9</text><text x="541" y="540">12</text><text x="584" y="540">15</text><text x="626" y="540">18</text><text x="669" y="540">21</text><text x="711" y="540">0</text><text x="754" y="540">3</text><text x="796" y="540">6</text><text x="839" y="540">9</text><text x="881" y="540">12</text><text x="924" y="540">15</text><text x="966" y="540">18</text><text x="1009" y="540">21</text><text x="1051" y="540">0</text><text x="1094" y="540">3</text><text x="1136" y="540">6</text><text x="1179" y="540">9</text><text x="1221" y="540">12</text>
<text x="116" y="1019">6</text><text x="159" y="1019">9</text><text x="202" y="1019">12</text><text x="244" y="1019">15</text><text x="287" y="1019">18</text><text x="329" y="1019">21</text><text x="371" y="1019">0</text><text x="414" y="1019">3</text><text x="456" y="1019">6</text><text x="499" y="1019">9</text><text x="541" y="1019">12</text><text x="584" y="1019">15</text><text x="626" y="1019">18</text><text x="669" y="1019">21</text><text x="711" y="1019">0</text><text x="754" y="1019">3</text><text x="796" y="1019">6</text><text x="839" y="1019">9</text><text x="881" y="1019">12</text><text x="924" y="1019">15</text><text x="966" y="1019">18</text><text x="1009" y="1019">21</text><text x="1051" y="1019">0</text><text x="1094" y="1019">3</text><text x="1136" y="1019">6</text><text x="1179" y="1019">9</text><text x="1221" y="1019">12</text>
</g>

<text x="179" y="554" font-size="15" textLength="16" lengthAdjust="spacingAndGlyphs">13</text><text x="206" y="554" class="s" textLength="54" lengthAdjust="spacingAndGlyphs">августа</text>
<text x="519" y="554" font-size="15" textLength="16" lengthAdjust="spacingAndGlyphs">14</text><text x="546" y="554" class="s" textLength="54" lengthAdjust="spacingAndGlyphs">августа</text>
<text x="859" y="554" font-size="15" textLength="16" lengthAdjust="spacingAndGlyphs">15</text><text x="887" y="554" class="s" textLength="54" lengthAdjust="spacingAndGlyphs">августа</text>

<!-- precip values -->
<g class="s it" text-anchor="middle" letter-spacing="1">
<text x="138" y="778">0.4</text><text x="180" y="778">0.1</text><text x="222" y="778">0.1</text><text x="307" y="778">0.1</text><text x="350" y="778">0.3</text><text x="392" y="778">0.1</text><text x="435" y="778">0.1</text><text x="775" y="778">3.8</text><text x="818" y="778">4</text><text x="860" y="778">0.3</text><text x="903" y="778">0.1</text><text x="1115" y="778">2</text><text x="1158" y="778">3.3</text><text x="1200" y="778">1.5</text>
</g>

<!-- side labels -->
<text x="8" y="287" class="s" textLength="79" lengthAdjust="spacingAndGlyphs">Тем-ра(°C)</text>
<text x="40" y="316" class="w" textLength="14" lengthAdjust="spacingAndGlyphs">2м</text>
<path class="l" stroke="#ff4030" d="M11 323.500H82"/>
<text x="26" y="362" class="w it" font-weight="bold" textLength="16" lengthAdjust="spacingAndGlyphs" style="font-family:'Liberation Serif',serif">Td</text><text x="54" y="362" class="w" textLength="12" lengthAdjust="spacingAndGlyphs">2м</text>
<path class="l" stroke="#008000" stroke-dasharray="4 2" d="M11 369.500H78"/>
<text x="23" y="408" class="w it" textLength="21" lengthAdjust="spacingAndGlyphs">850</text><text x="51" y="408" class="w" textLength="20" lengthAdjust="spacingAndGlyphs">гПа</text>
<path class="l" stroke="#ee008c" d="M11 415.500H41M52 415.500H82"/>
<text x="23" y="454" class="w it" textLength="21" lengthAdjust="spacingAndGlyphs">700</text><text x="51" y="454" class="w" textLength="20" lengthAdjust="spacingAndGlyphs">гПа</text>
<path class="l" stroke="#ee008c" d="M11 462.500H30M38 462.500H40M48 462.500H67M76 462.500H78"/>
<text x="23" y="501" class="w it" textLength="21" lengthAdjust="spacingAndGlyphs">500</text><text x="51" y="501" class="w" textLength="20" lengthAdjust="spacingAndGlyphs">гПа</text>
<path class="l" stroke="#ee008c" stroke-dasharray="4 2" d="M11 508.500H78"/>
<text x="22" y="622" class="s" textLength="61" lengthAdjust="spacingAndGlyphs">Давление</text>
<text x="34" y="645" class="s" textLength="36" lengthAdjust="spacingAndGlyphs">(гПа)</text>
<text x="23" y="772" class="s" textLength="57" lengthAdjust="spacingAndGlyphs">(мм/3ч.)</text>
<text x="27" y="791" class="s" textLength="49" lengthAdjust="spacingAndGlyphs">Осадки</text>
<text x="23" y="810" class="s" textLength="57" lengthAdjust="spacingAndGlyphs">(мм/1ч.)</text>
<text x="13" y="872" class="s" textLength="77" lengthAdjust="spacingAndGlyphs">Облачность</text>
<text x="13" y="939" class="s" textLength="78" lengthAdjust="spacingAndGlyphs">Конвективн.</text>
<text x="14" y="959" class="s" textLength="75" lengthAdjust="spacingAndGlyphs">облачность</text>
<text x="39" y="979" class="s" textLength="26" lengthAdjust="spacingAndGlyphs">(км)</text>
</svg>
</body></html>
